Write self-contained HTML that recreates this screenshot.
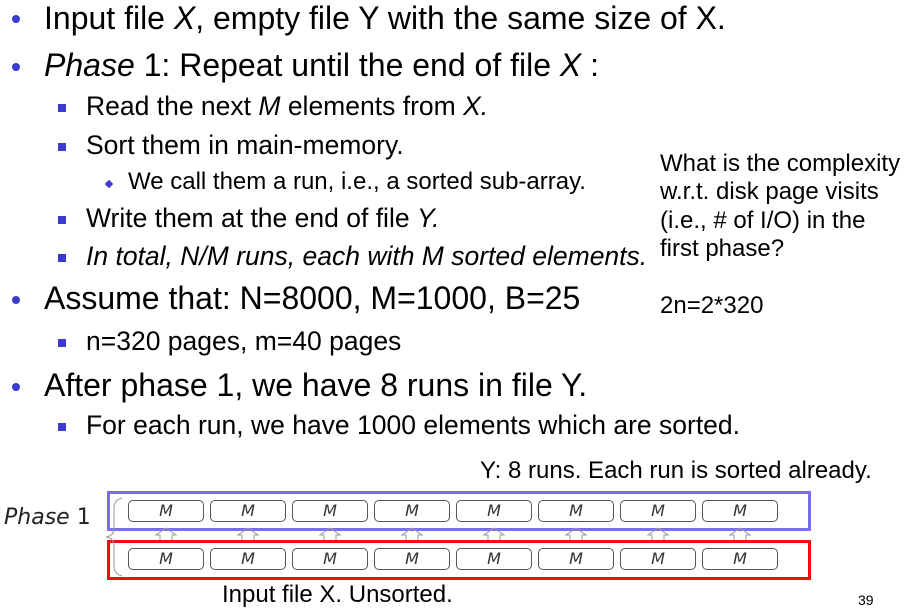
<!DOCTYPE html>
<html><head><meta charset="utf-8"><style>
body{margin:0;width:914px;height:608px;background:#fff;position:relative;font-family:"Liberation Sans",sans-serif;color:#000;overflow:hidden}
.t{position:absolute;white-space:nowrap;line-height:1}
.l1{font-size:32px}.l2{font-size:26.5px}.l3{font-size:24px}
.b1{position:absolute;width:8px;height:8px;border-radius:50%;background:#3a3acc}
.b2{position:absolute;width:8px;height:8px;background:#3a3acc}
.b3{position:absolute;width:6px;height:6px;background:#3a3acc;transform:rotate(45deg)}
.box{position:absolute;left:107px;width:698px;height:34px}
.m{position:absolute;width:74px;height:20px;border:1.5px solid #555;border-radius:5px;font-style:italic;font-size:16px;text-align:center;line-height:20px;font-family:"DejaVu Sans",sans-serif;color:#333}
</style></head><body>
<div class="b1" style="left:12px;top:15px"></div><div class="t l1" style="left:44px;top:2px">Input file <i>X</i>, empty file Y with the same size of X.</div>
<div class="b1" style="left:12px;top:63px"></div><div class="t l1" style="left:44px;top:49px"><i>Phase</i> 1: Repeat until the end of file <i>X</i> :</div>
<div class="b2" style="left:58px;top:104px"></div><div class="t l2" style="left:86px;top:93px">Read the next <i>M</i> elements from <i>X.</i></div>
<div class="b2" style="left:58px;top:143px"></div><div class="t l2" style="left:86px;top:131.5px">Sort them in main-memory.</div>
<div class="b3" style="left:106px;top:181px"></div><div class="t l3" style="left:128px;top:170px">We call them a run, i.e., a sorted sub-array.</div>
<div class="b2" style="left:58px;top:216px"></div><div class="t l2" style="left:86px;top:204.5px">Write them at the end of file <i>Y.</i></div>
<div class="b2" style="left:58px;top:254px"></div><div class="t l2" style="left:86px;top:242.5px"><i>In total, N/M runs, each with M sorted elements.</i></div>
<div class="b1" style="left:12px;top:296px"></div><div class="t l1" style="left:44px;top:282px">Assume that: N=8000, M=1000, B=25</div>
<div class="b2" style="left:58px;top:339px"></div><div class="t l2" style="left:86px;top:327.5px">n=320 pages, m=40 pages</div>
<div class="b1" style="left:12px;top:383px"></div><div class="t l1" style="left:44px;top:369px">After phase 1, we have 8 runs in file Y.</div>
<div class="b2" style="left:58px;top:423px"></div><div class="t l2" style="left:86px;top:411.5px">For each run, we have 1000 elements which are sorted.</div>
<div class="t" style="left:660px;top:150px;font-size:24px;line-height:28.4px">What is the complexity<br>w.r.t. disk page visits<br>(i.e., # of I/O) in the<br>first phase?</div>
<div class="t" style="left:660px;top:294px;font-size:24px">2n=2*320</div>
<div class="t" style="left:480px;top:459px;font-size:24px">Y: 8 runs. Each run is sorted already.</div>
<div class="t" style="left:4px;top:507px;font-size:22px;font-family:'DejaVu Sans',sans-serif;color:#222"><i>Phase</i> 1</div>
<div class="box" style="top:491px;border:3px solid #7b6cf5"></div>
<div class="box" style="top:540px;border:3px solid #ee1111"></div>
<div class="m" style="left:128px;top:500px">M</div><div class="m" style="left:210px;top:500px">M</div><div class="m" style="left:292px;top:500px">M</div><div class="m" style="left:374px;top:500px">M</div><div class="m" style="left:456px;top:500px">M</div><div class="m" style="left:538px;top:500px">M</div><div class="m" style="left:620px;top:500px">M</div><div class="m" style="left:702px;top:500px">M</div>
<div class="m" style="left:128px;top:548px">M</div><div class="m" style="left:210px;top:548px">M</div><div class="m" style="left:292px;top:548px">M</div><div class="m" style="left:374px;top:548px">M</div><div class="m" style="left:456px;top:548px">M</div><div class="m" style="left:538px;top:548px">M</div><div class="m" style="left:620px;top:548px">M</div><div class="m" style="left:702px;top:548px">M</div>
<svg style="position:absolute;left:0;top:0" width="914" height="608"><g fill="none" stroke="#999" stroke-width="1">
<path d="M160 540v-5h-4l10-7 10 7h-4v5"/><path d="M242 540v-5h-4l10-7 10 7h-4v5"/><path d="M324 540v-5h-4l10-7 10 7h-4v5"/><path d="M406 540v-5h-4l10-7 10 7h-4v5"/><path d="M488 540v-5h-4l10-7 10 7h-4v5"/><path d="M570 540v-5h-4l10-7 10 7h-4v5"/><path d="M652 540v-5h-4l10-7 10 7h-4v5"/><path d="M734 540v-5h-4l10-7 10 7h-4v5"/>
<path d="M122 498q-8 2-8 10v20q0 8-8 9q8 1 8 9v20q0 8 8 10"/></g></svg>
<div class="t" style="left:222px;top:583px;font-size:24px">Input file X. Unsorted.</div>
<div class="t" style="left:858px;top:593px;font-size:14px">39</div>
</body></html>
